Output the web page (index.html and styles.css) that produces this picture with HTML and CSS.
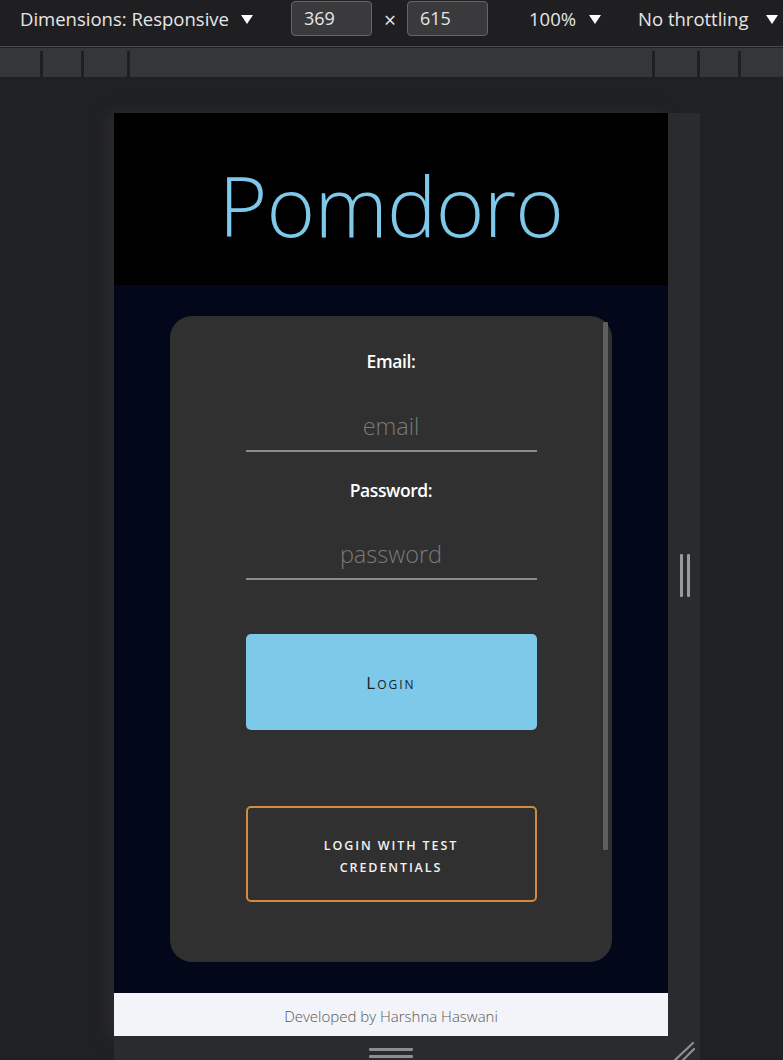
FILE: index.html
```html
<!DOCTYPE html>
<html lang="en">
<head>
<meta charset="utf-8">
<title>Pomdoro</title>
<link rel="stylesheet" href="styles.css">
</head>
<body>
<div class="toolbar">
  <span class="tb-label dims">Dimensions: Responsive</span>
  <svg class="tri" width="12" height="9" viewBox="0 0 12 9"><polygon points="0,0 12,0 6,9" fill="#ffffff"/></svg>
  <span class="tb-box box-w">369</span>
  <span class="tb-x">×</span>
  <span class="tb-box box-h">615</span>
  <span class="tb-label zoom">100%</span>
  <svg class="tri" width="12" height="9" viewBox="0 0 12 9"><polygon points="0,0 12,0 6,9" fill="#ffffff"/></svg>
  <span class="tb-label throttle">No throttling</span>
  <svg class="tri" width="12" height="9" viewBox="0 0 12 9"><polygon points="0,0 12,0 6,9" fill="#ffffff"/></svg>
</div>
<div class="ruler">
  <div class="seg"></div><div class="seg"></div><div class="seg"></div><div class="seg"></div><div class="seg"></div><div class="seg"></div><div class="seg last"></div>
</div>
<div class="stage">
  <div class="device">
    <div class="viewport">
      <header class="app-header">
        <h1 class="app-title">Pomdoro</h1>
      </header>
      <main class="app-main">
        <form class="card">
          <label class="field-label" for="email">Email:</label>
          <input class="field-input" id="email" type="text" placeholder="email">
          <label class="field-label" for="password">Password:</label>
          <input class="field-input" id="password" type="password" placeholder="password">
          <button class="btn-login" type="button">Login</button>
          <button class="btn-test" type="button">Login with test credentials</button>
          <div class="card-scroll"></div>
        </form>
      </main>
      <footer class="app-footer">Developed by Harshna Haswani</footer>
    </div>
    <div class="handle-right"><span class="vbar"></span><span class="vbar"></span></div>
    <div class="handle-bottom"><span class="hbar"></span><span class="hbar"></span></div>
    <div class="corner">
      <svg width="32" height="24" viewBox="0 0 32 24"><line x1="7" y1="24" x2="25" y2="7" stroke="#8e8e91" stroke-width="2.2" stroke-linecap="round"/><line x1="15" y1="24" x2="26" y2="13" stroke="#8e8e91" stroke-width="2.2" stroke-linecap="round"/></svg>
    </div>
  </div>
</div>
</body>
</html>
```
FILE: styles.css
```css
* { box-sizing: border-box; }
html, body { margin: 0; padding: 0; }
body {
  width: 783px;
  height: 1060px;
  overflow: hidden;
  background: #202124;
  font-family: "Open Sans", "Noto Sans", sans-serif;
}

/* DevTools toolbar */
.toolbar {
  height: 47px;
  display: flex;
  align-items: flex-start;
  padding-top: 1px;
  background: #1f1f22;
  border-bottom: 1px solid #4a4b4e;
  color: #e6e6e6;
  font-size: 18.5px;
}
.tb-label { height: 36px; line-height: 36px; white-space: nowrap; flex: none; }
.dims { margin-left: 20px; width: 221px; }
.tri { margin-top: 14px; flex: none; }
.tb-box {
  height: 35px;
  line-height: 33px;
  width: 81px;
  padding-left: 12px;
  background: #3a3a3d;
  border: 1px solid #66666a;
  border-radius: 4px;
  font-size: 18px;
  flex: none;
}
.box-w { margin-left: 38px; }
.tb-x { height: 36px; line-height: 38px; margin: 0 11px 0 12px; font-size: 21px; flex: none; }
.zoom { margin-left: 41px; width: 60px; }
.throttle { margin-left: 37px; width: 128px; }

/* Ruler */
.ruler {
  margin-top: 1px;
  height: 29px;
  background: #35363a;
  display: grid;
  grid-template-columns: 43px 41px 46px 525px 45px 41px 42px;
  padding-top: 3px;
}
.seg { border-right: 3px solid #1f1f22; }
.seg.last { border-right: none; }

/* Stage */
.stage {
  padding: 36px 0 0 114px;
}
.device {
  display: grid;
  grid-template-columns: 554px 32px;
  grid-template-rows: 923px 24px;
}
.viewport {
  display: flex;
  flex-direction: column;
  box-shadow: -6px 0 14px rgba(52, 52, 56, 0.55);
}
.handle-right {
  background: #2a2b2e;
  display: flex;
  justify-content: center;
  align-items: center;
  gap: 4px;
  padding-left: 1px;
  padding-top: 2px;
}
.vbar { width: 3px; height: 43px; background: #9a9a9e; border-radius: 1px; }
.handle-bottom {
  background: #2a2b2e;
  display: flex;
  flex-direction: column;
  align-items: center;
  gap: 4px;
  padding-top: 12px;
}
.hbar { width: 44px; height: 3px; background: #8e8e91; border-radius: 1px; }
.corner { background: #2a2b2e; }
.corner svg { display: block; }

/* App */
.app-header {
  height: 172px;
  background: #000000;
  display: flex;
  align-items: center;
  justify-content: center;
}
.app-title {
  margin: 0;
  padding-top: 10px;
  color: #7ec8ea;
  font-family: "Open Sans", "Noto Sans", sans-serif;
  font-weight: 300;
  font-size: 83px;
  line-height: 1;
  letter-spacing: -0.7px;
}
.app-main {
  height: 708px;
  background: #020819;
  padding: 31px 56px;
}
.card {
  position: relative;
  height: 646px;
  margin: 0;
  background: #303030;
  border-radius: 22px;
  display: flex;
  flex-direction: column;
  align-items: center;
  padding-top: 33px;
}
.field-label {
  color: #ffffff;
  font-size: 17.5px;
  font-weight: 600;
  line-height: 24px;
  height: 24px;
  letter-spacing: -0.4px;
}
.field-input {
  margin: 28px 0 27px;
  width: 291px;
  height: 51px;
  padding: 0;
  background: transparent;
  border: none;
  border-bottom: 2px solid #8c8c8c;
  outline: none;
  text-align: center;
  font-family: "Open Sans", "Noto Sans", sans-serif;
  font-weight: 300;
  font-size: 23.5px;
  color: #dddddd;
}
#email { margin-bottom: 26px; }
.field-input::placeholder { color: #7a7a7a; }
#password { margin-top: 27px; margin-bottom: 54px; }
.btn-login {
  width: 291px;
  height: 96px;
  background: #7ec8ea;
  border: none;
  border-radius: 5px;
  font-family: "Open Sans", "Noto Sans", sans-serif;
  font-size: 17px;
  font-variant: small-caps;
  letter-spacing: 2px;
  color: #14232a;
  padding: 0;
}
.btn-test {
  margin-top: 76px;
  width: 291px;
  height: 96px;
  background: transparent;
  border: 2px solid #d48b3a;
  border-radius: 5px;
  font-family: "Open Sans", "Noto Sans", sans-serif;
  font-size: 12.5px;
  font-weight: 600;
  text-transform: uppercase;
  letter-spacing: 1.9px;
  line-height: 22px;
  color: #f2f2f2;
  padding: 5px 72px 0;
}
.card-scroll {
  position: absolute;
  top: 6px;
  right: 4px;
  width: 5px;
  height: 528px;
  background: #5f5f62;
  border-radius: 1px;
}
.app-footer {
  height: 43px;
  background: #f3f4f9;
  color: #585858;
  font-size: 15px;
  font-weight: 300;
  display: flex;
  align-items: center;
  justify-content: center;
  padding-top: 3px;
}
```
